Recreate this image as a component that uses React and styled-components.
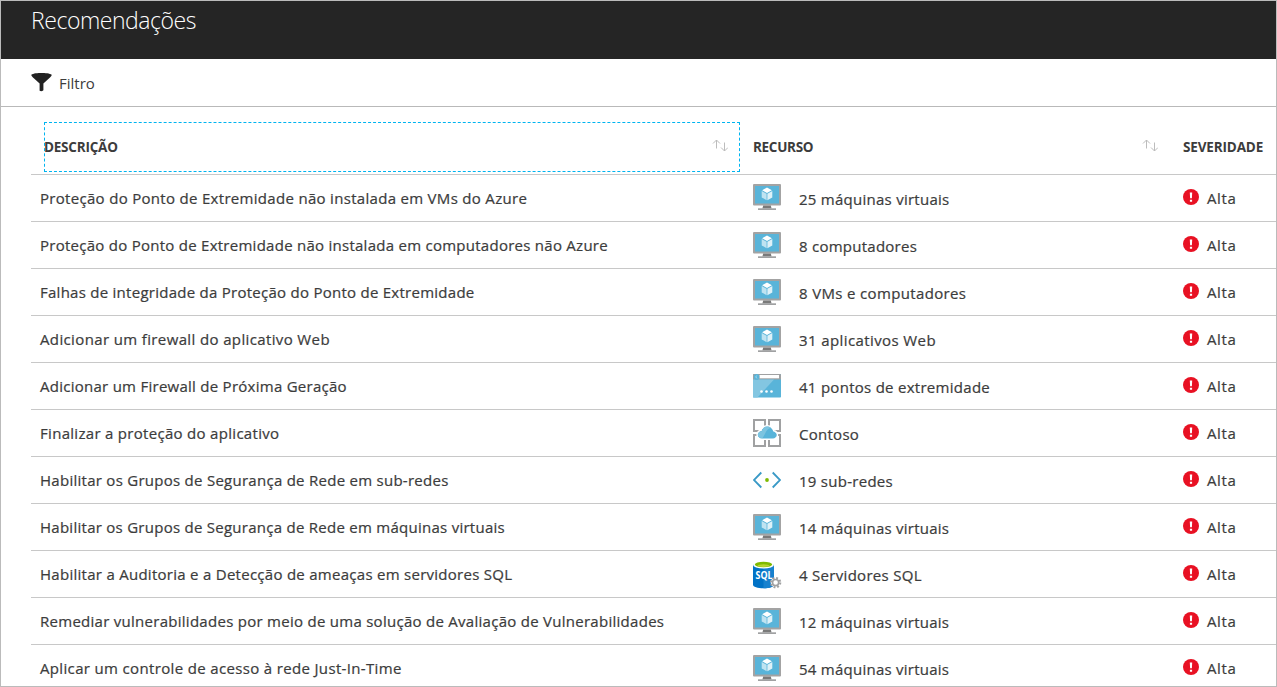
import React from 'react';
import styled, { createGlobalStyle } from 'styled-components';

const GlobalStyle = createGlobalStyle`
  * { box-sizing: border-box; }
  html, body { margin: 0; padding: 0; background: #fff; overflow: hidden; }
  body { font-family: "Open Sans", "Noto Sans", sans-serif; color: #3c3c3c; }
  svg { display: block; flex: none; }
`;

const Blade = styled.div`
  width: 1277px;
  height: 687px;
  border: 1px solid #bbb;
  overflow: hidden;
  background: #fff;
`;

const TitleBar = styled.header`
  height: 58px;
  padding: 3px 0 0 30px;
  background: #252525;
`;

const Title = styled.h1`
  margin: 0;
  color: #fff;
  font-size: 23px;
  font-weight: 300;
  line-height: 33px;
  letter-spacing: -0.45px;
`;

const Toolbar = styled.div`
  height: 48px;
  padding-left: 30px;
  display: flex;
  align-items: center;
  border-bottom: 1px solid #b9b9b9;
`;

const FilterButton = styled.button`
  display: flex;
  align-items: center;
  gap: 7px;
  padding: 0;
  border: 0;
  background: none;
  font: 400 15px/20px "Open Sans", "Noto Sans", sans-serif;
  color: #3c3c3c;
  svg { margin-bottom: 1px; }
`;

const Table = styled.div`
  margin-left: 30px;
`;

const HeaderRow = styled.div`
  display: grid;
  grid-template-columns: 709px 430px 1fr;
  height: 68px;
  padding: 15px 0 0 13px;
  border-bottom: 1px solid #c8c8c8;
`;

const HeaderCell = styled.div`
  width: ${(p) => (p.$focused ? '696px' : 'auto')};
  height: 50px;
  padding-right: ${(p) => (p.$focused ? '12px' : '25px')};
  display: flex;
  align-items: center;
  justify-content: space-between;
  font-size: 13.5px;
  font-weight: 700;
  letter-spacing: ${(p) => p.$spacing}px;
  white-space: nowrap;
  outline: ${(p) => (p.$focused ? '1px dashed #00b4f0' : 'none')};
  outline-offset: -1px;
  svg { margin-bottom: 4px; }
`;

const Row = styled.div`
  display: grid;
  grid-template-columns: 722px 430px 1fr;
  height: 47px;
  border-bottom: 1px solid #c8c8c8;
  font-size: 15px;
  -webkit-text-stroke: 0.22px #3c3c3c;
`;

const Description = styled.div`
  padding-left: 9px;
  line-height: 46px;
  white-space: nowrap;
  letter-spacing: ${(p) => p.$spacing}px;
`;

const Resource = styled.div`
  display: flex;
  align-items: flex-start;
  gap: 18px;
  padding-top: 8px;
  svg { margin-top: ${(p) => p.$iconTop}px; }
`;

const ResourceName = styled.span`
  line-height: 32px;
  white-space: nowrap;
  letter-spacing: ${(p) => p.$spacing}px;
`;

const Severity = styled.div`
  display: flex;
  align-items: center;
  gap: 8px;
  letter-spacing: 0.6px;
  svg { margin-bottom: 2px; }
`;

const FilterIcon = () => (
  <svg width="21" height="19" viewBox="0 0 21 19">
    <path d="M.3 1.700C2 .4 7 0 10.500 0S19 .4 20.700 1.700C20.700 3 19.500 4 17.900 5.500L12.400 10.600V17.300Q10.500 18.800 8.600 17.800V10.600L3.100 5.500C1.500 4 .3 3 .3 1.700Z" fill="#222" />
  </svg>
);

const SortIcon = () => (
  <svg width="16" height="13" viewBox="0 0 16 13" fill="none" stroke="#bcbcbc" strokeWidth="1">
    <path d="M4.500 9.500V1M1 4.500 4.500 1 8 4.500M12.500 3.500V12M9 8.500 12.500 12 16 8.500" />
  </svg>
);

const MonitorIcon = () => (
  <svg width="28" height="28" viewBox="0 0 28 28">
    <rect width="28" height="21.500" rx="1" fill="#a3a3a3" />
    <rect x="2" y="2" width="24" height="17.500" fill="#59b4d9" />
    <path d="M10.200 21.500h7.600l.8 3H9.400z" fill="#7a7a7a" />
    <path d="M5 24.300h18v1.700H5z" fill="#a0a1a2" />
    <path d="m14 3.600 4.900 2.700L14 9 9.100 6.300Z" fill="#fff" />
    <path d="m8.700 7.100 4.900 2.700v6.400l-4.900-2.800Z" fill="#bfe3f1" />
    <path d="m19.300 7.100-4.900 2.700v6.400l4.900-2.800Z" fill="#def1f8" />
  </svg>
);

const EndpointIcon = () => (
  <svg width="28" height="28" viewBox="0 0 28 28">
    <rect y="1" width="28" height="23.500" rx=".8" fill="#59b4d9" />
    <path d="M0 6.500V2q0-1 1-1h26q1 0 1 1v4.500Z" fill="#a0a1a2" />
    <path d="M0 6.500h21L4.500 24.500H0Z" fill="#83c6e1" />
    <rect x="6.500" y="2" width="19.500" height="3.300" fill="#fff" />
    <circle cx="3.600" cy="3.900" r="2.800" fill="#59b4d9" />
    <path d="M2.500 3.900 4.200 2.500M2.500 3.900 4.200 5.300" stroke="#a9dbed" strokeWidth=".8" fill="none" />
    <circle cx="8.500" cy="18.500" r="1.300" fill="#fff" />
    <circle cx="13.500" cy="18.500" r="1.300" fill="#fff" />
    <circle cx="18.500" cy="18.500" r="1.300" fill="#fff" />
  </svg>
);

const ApplicationIcon = () => (
  <svg width="28" height="28" viewBox="0 0 28 28">
    <path d="M1 1h11v11H1ZM16 1h11v11H16ZM1 16h11v11H1ZM16 16h11v11H16Z" fill="none" stroke="#a0a1a2" strokeWidth="2" />
    <path d="M9 19C6.500 19 5.300 17.600 5.300 15.700S6.900 12.500 9 12.500C9.300 10 11.500 8 14.200 8c3.100 0 5 2 5.500 4.800 2.200.3 3.500 1.500 3.500 3.300S21.700 19 19.900 19Z" fill="#59b4d9" stroke="#fff" strokeWidth="4" paintOrder="stroke" />
    <path d="M9 19C6.500 19 5.300 17.600 5.300 15.700S6.900 12.500 9 12.500C9.300 10 11.500 8 14.200 8c3.100 0 5 2 5.500 4.800 2.200.3 3.500 1.500 3.500 3.300S21.700 19 19.900 19Z" fill="#59b4d9" stroke="#59b4d9" strokeWidth="1" />
    <path d="M9 19.200C6.400 19.200 4.900 17.800 4.900 15.600s1.700-3.400 4-3.400c.5-3 2.700-4.600 5.200-4.600 1.500 0 2.700.5 3.600 1.300-4.500.4-5.300 6.400-8.300 10.300Z" fill="#7cc4e0" />
  </svg>
);

const SubnetIcon = () => (
  <svg width="28" height="28" viewBox="0 0 28 28" fill="none">
    <path d="M8.300 6.500.9 14l7.400 7.500M19.700 6.500 27.100 14l-7.400 7.500" stroke="#3999c6" strokeWidth="1.800" />
    <circle cx="14" cy="14" r="1.900" fill="#7fba00" />
  </svg>
);

const SqlText = styled.text`
  font: 700 10px "Open Sans", "Noto Sans", sans-serif;
  fill: #fff;
  -webkit-text-stroke: 0;
`;

const SqlIcon = () => (
  <svg width="28" height="28" viewBox="0 0 28 28" overflow="visible">
    <path d="M0 3.500v20C0 26 4.500 27.200 10.500 27.200S21 26 21 23.500v-20Z" fill="#0072c6" />
    <path d="M10.500 4H21v19.500c0 2.500-4.500 3.700-10.500 3.700Z" fill="#1781ce" />
    <ellipse cx="10.500" cy="3.800" rx="10.500" ry="3.800" fill="#fff" />
    <ellipse cx="10.500" cy="3.500" rx="8.700" ry="2.800" fill="#7fba00" />
    <ellipse cx="10.500" cy="4.600" rx="6" ry="1.300" fill="#b8d432" />
    <SqlText x="2.500" y="18" textLength="17" lengthAdjust="spacingAndGlyphs">SQL</SqlText>
    <circle cx="22.600" cy="21.600" r="4.900" fill="#fff" />
    <circle cx="22.600" cy="21.600" r="4.700" fill="none" stroke="#a0a1a2" strokeWidth="2" strokeDasharray="1.900 1.790" />
    <circle cx="22.600" cy="21.600" r="3.100" fill="#fff" stroke="#a0a1a2" strokeWidth="1.700" />
  </svg>
);

const AlertIcon = () => (
  <svg width="16" height="16" viewBox="0 0 16 16">
    <circle cx="8" cy="8" r="8" fill="#e81123" />
    <path d="M6.800 3.500h2.400L8.900 9.300H7.100ZM6.900 10.700h2.200v2H6.900Z" fill="#fff" />
  </svg>
);

const icons = {
  monitor: MonitorIcon,
  endpoint: EndpointIcon,
  application: ApplicationIcon,
  subnet: SubnetIcon,
  sql: SqlIcon,
};

const rows = [
  { text: 'Proteção do Ponto de Extremidade não instalada em VMs do Azure', icon: 'monitor', top: 1, resource: '25 máquinas virtuais', ts: 0.307, rs: 0.26 },
  { text: 'Proteção do Ponto de Extremidade não instalada em computadores não Azure', icon: 'monitor', top: 2, resource: '8 computadores', ts: 0.264, rs: 0.25 },
  { text: 'Falhas de integridade da Proteção do Ponto de Extremidade', icon: 'monitor', top: 2, resource: '8 VMs e computadores', ts: 0.263, rs: 0.35 },
  { text: 'Adicionar um firewall do aplicativo Web', icon: 'monitor', top: 2, resource: '31 aplicativos Web', ts: 0.37, rs: 0.4 },
  { text: 'Adicionar um Firewall de Próxima Geração', icon: 'endpoint', top: 2, resource: '41 pontos de extremidade', ts: 0.265, rs: 0.28 },
  { text: 'Finalizar a proteção do aplicativo', icon: 'application', top: 1, resource: 'Contoso', ts: 0.3, rs: 0.27 },
  { text: 'Habilitar os Grupos de Segurança de Rede em sub-redes', icon: 'subnet', top: 1, resource: '19 sub-redes', ts: 0.27, rs: 0.27 },
  { text: 'Habilitar os Grupos de Segurança de Rede em máquinas virtuais', icon: 'monitor', top: 2, resource: '14 máquinas virtuais', ts: 0.265, rs: 0.25 },
  { text: 'Habilitar a Auditoria e a Detecção de ameaças em servidores SQL', icon: 'sql', top: 2, resource: '4 Servidores SQL', ts: 0.275, rs: 0.3 },
  { text: 'Remediar vulnerabilidades por meio de uma solução de Avaliação de Vulnerabilidades', icon: 'monitor', top: 2, resource: '12 máquinas virtuais', ts: 0.275, rs: 0.25 },
  { text: 'Aplicar um controle de acesso à rede Just-In-Time', icon: 'monitor', top: 2, resource: '54 máquinas virtuais', ts: 0.345, rs: 0.25 },
];

export default function App() {
  return (
    <>
      <GlobalStyle />
      <Blade>
        <TitleBar><Title>Recomendações</Title></TitleBar>
        <Toolbar>
          <FilterButton><FilterIcon />Filtro</FilterButton>
        </Toolbar>
        <Table>
          <HeaderRow>
            <HeaderCell $focused $spacing={-0.22}>DESCRIÇÃO<SortIcon /></HeaderCell>
            <HeaderCell $spacing={-0.3}>RECURSO<SortIcon /></HeaderCell>
            <HeaderCell $spacing={-0.15}>SEVERIDADE</HeaderCell>
          </HeaderRow>
          {rows.map((row) => {
            const Icon = icons[row.icon];
            return (
              <Row key={row.text}>
                <Description $spacing={row.ts}>{row.text}</Description>
                <Resource $iconTop={row.top}>
                  <Icon />
                  <ResourceName $spacing={row.rs}>{row.resource}</ResourceName>
                </Resource>
                <Severity><AlertIcon />Alta</Severity>
              </Row>
            );
          })}
        </Table>
      </Blade>
    </>
  );
}
